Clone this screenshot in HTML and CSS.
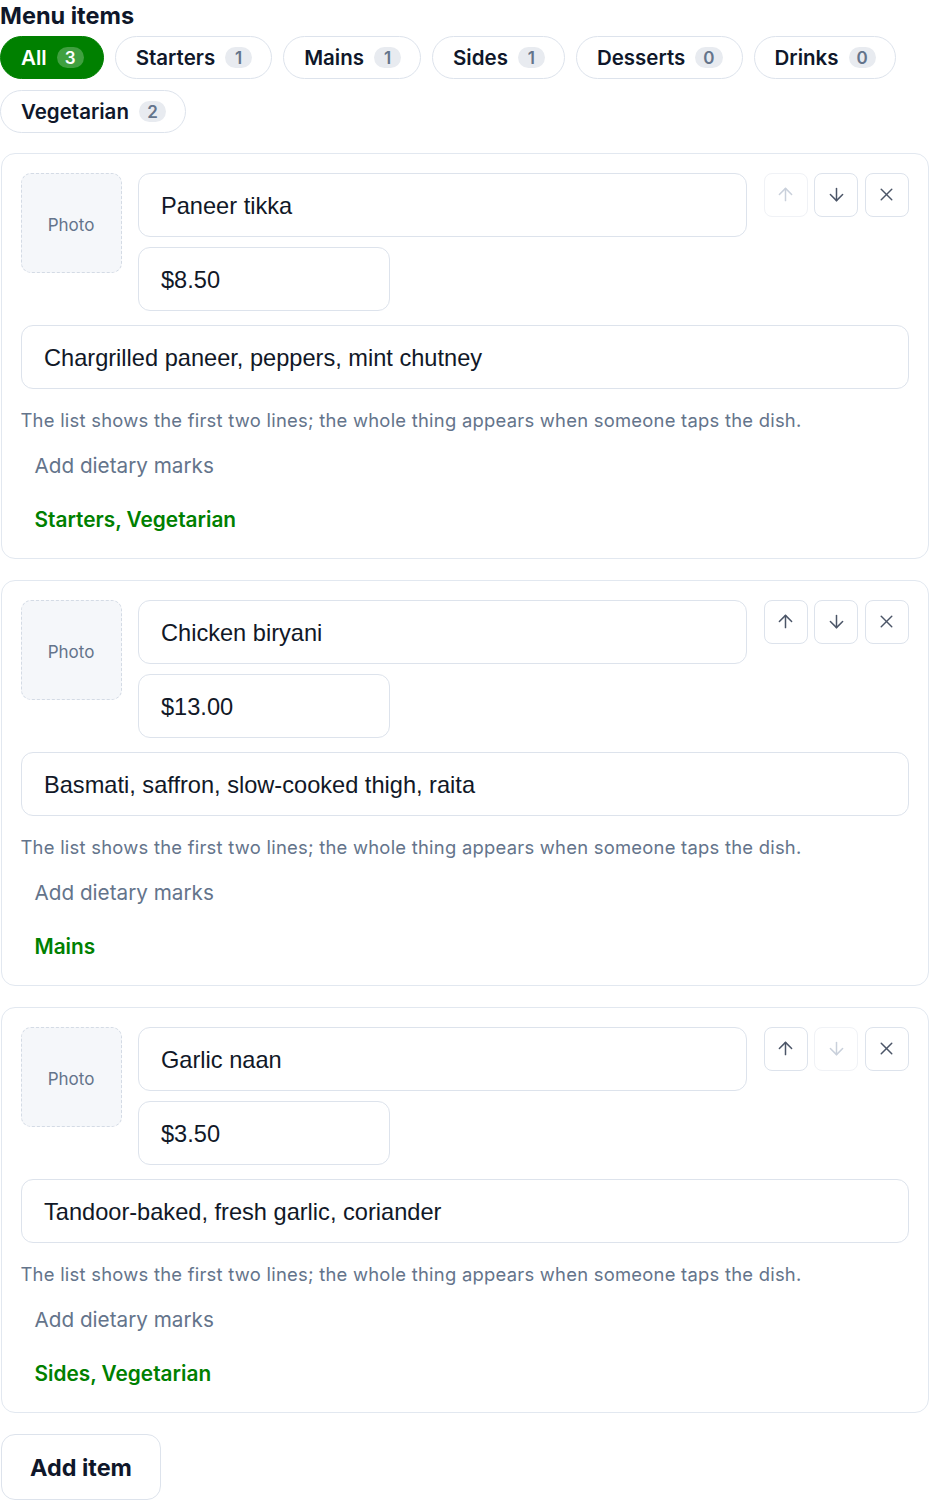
FILE: index.html
```html
<!DOCTYPE html>
<html lang="en">
<head>
<meta charset="utf-8">
<title>Menu items</title>
<link rel="stylesheet" href="styles.css">
</head>
<body>
<main class="page">
  <h2 class="title">Menu items</h2>
  <div class="chips">
    <button class="chip chip-active">All <span class="count">3</span></button>
    <button class="chip">Starters <span class="count">1</span></button>
    <button class="chip">Mains <span class="count">1</span></button>
    <button class="chip">Sides <span class="count">1</span></button>
    <button class="chip">Desserts <span class="count">0</span></button>
    <button class="chip">Drinks <span class="count">0</span></button>
    <button class="chip">Vegetarian <span class="count">2</span></button>
  </div>

  <div class="items">
    <section class="card">
      <div class="top">
        <div class="photo">Photo</div>
        <div class="fields">
          <div class="input name">Paneer tikka</div>
          <div class="input price">$8.50</div>
        </div>
        <div class="actions">
          <button class="icon-btn disabled" aria-label="Move up"><svg viewBox="0 0 24 24"><path d="m5 12 7-7 7 7"/><path d="M12 19V5"/></svg></button>
          <button class="icon-btn" aria-label="Move down"><svg viewBox="0 0 24 24"><path d="M12 5v14"/><path d="m19 12-7 7-7-7"/></svg></button>
          <button class="icon-btn" aria-label="Remove"><svg viewBox="0 0 24 24"><path d="M18 6 6 18"/><path d="m6 6 12 12"/></svg></button>
        </div>
      </div>
      <div class="input desc">Chargrilled paneer, peppers, mint chutney</div>
      <p class="hint">The list shows the first two lines; the whole thing appears when someone taps the dish.</p>
      <button class="diet">Add dietary marks</button>
      <div class="cats">Starters, Vegetarian</div>
    </section>

    <section class="card">
      <div class="top">
        <div class="photo">Photo</div>
        <div class="fields">
          <div class="input name">Chicken biryani</div>
          <div class="input price">$13.00</div>
        </div>
        <div class="actions">
          <button class="icon-btn" aria-label="Move up"><svg viewBox="0 0 24 24"><path d="m5 12 7-7 7 7"/><path d="M12 19V5"/></svg></button>
          <button class="icon-btn" aria-label="Move down"><svg viewBox="0 0 24 24"><path d="M12 5v14"/><path d="m19 12-7 7-7-7"/></svg></button>
          <button class="icon-btn" aria-label="Remove"><svg viewBox="0 0 24 24"><path d="M18 6 6 18"/><path d="m6 6 12 12"/></svg></button>
        </div>
      </div>
      <div class="input desc">Basmati, saffron, slow-cooked thigh, raita</div>
      <p class="hint">The list shows the first two lines; the whole thing appears when someone taps the dish.</p>
      <button class="diet">Add dietary marks</button>
      <div class="cats">Mains</div>
    </section>

    <section class="card">
      <div class="top">
        <div class="photo">Photo</div>
        <div class="fields">
          <div class="input name">Garlic naan</div>
          <div class="input price">$3.50</div>
        </div>
        <div class="actions">
          <button class="icon-btn" aria-label="Move up"><svg viewBox="0 0 24 24"><path d="m5 12 7-7 7 7"/><path d="M12 19V5"/></svg></button>
          <button class="icon-btn disabled" aria-label="Move down"><svg viewBox="0 0 24 24"><path d="M12 5v14"/><path d="m19 12-7 7-7-7"/></svg></button>
          <button class="icon-btn" aria-label="Remove"><svg viewBox="0 0 24 24"><path d="M18 6 6 18"/><path d="m6 6 12 12"/></svg></button>
        </div>
      </div>
      <div class="input desc">Tandoor-baked, fresh garlic, coriander</div>
      <p class="hint">The list shows the first two lines; the whole thing appears when someone taps the dish.</p>
      <button class="diet">Add dietary marks</button>
      <div class="cats">Sides, Vegetarian</div>
    </section>
  </div>

  <button class="add">Add item</button>
</main>
</body>
</html>
```

FILE: styles.css
```css
* { box-sizing: border-box; }

body {
  margin: 0;
  background: #ffffff;
  font-family: Inter, "Noto Sans", sans-serif;
  color: #0f172a;
}

button {
  font-family: inherit;
  background: #ffffff;
  cursor: pointer;
}

.page {
  width: 930px;
  padding: 0 1px 0 0;
}

.title {
  margin: 0;
  font-size: 23.5px;
  line-height: 31px;
  font-weight: 700;
  color: #0f172a;
}

.chips {
  display: flex;
  flex-wrap: wrap;
  gap: 11px;
  margin-top: 5px;
}

.chip {
  display: inline-flex;
  align-items: center;
  height: 43px;
  padding: 0 19px 0 20px;
  border: 1.5px solid #dde3ec;
  border-radius: 999px;
  font-size: 20.5px;
  font-weight: 600;
  color: #0f172a;
}

.count {
  display: inline-flex;
  align-items: center;
  justify-content: center;
  height: 21px;
  min-width: 27px;
  padding: 0 8px;
  margin-left: 10px;
  border-radius: 999px;
  background: #e8ebf0;
  color: #64748b;
  font-size: 17px;
  font-weight: 600;
}

.chip-active {
  background: #008000;
  border-color: #008000;
  color: #ffffff;
}

.chip-active .count {
  background: rgba(255, 255, 255, 0.25);
  color: #ffffff;
}

.items {
  display: flex;
  flex-direction: column;
  gap: 21px;
  margin-top: 20px;
  margin-left: 1px;
}

.card {
  border: 1.5px solid #e2e8f0;
  border-radius: 14px;
  padding: 18.5px 19.5px 18.5px 18.5px;
}

.top {
  display: flex;
  align-items: flex-start;
}

.photo {
  flex: none;
  width: 101px;
  height: 100px;
  padding-top: 4px;
  border: 1.5px dashed #d4dbe5;
  border-radius: 10px;
  background: #f5f7fa;
  display: flex;
  align-items: center;
  justify-content: center;
  font-size: 17px;
  color: #64748b;
}

.fields {
  flex: 1;
  display: flex;
  flex-direction: column;
  gap: 10px;
  margin-left: 16px;
}

.input {
  height: 64px;
  border: 1.5px solid #dde3ec;
  border-radius: 12px;
  padding: 3px 22.5px 0;
  display: flex;
  align-items: center;
  font-family: "Liberation Sans", Arial, sans-serif;
  font-size: 23.6px;
  color: #111827;
  background: #ffffff;
}

.price {
  width: 252px;
}

.actions {
  flex: none;
  display: flex;
  gap: 6.5px;
  margin-left: 17px;
}

.icon-btn {
  width: 44px;
  height: 44px;
  padding: 0;
  border: 1.5px solid #dde3ec;
  border-radius: 8px;
  display: flex;
  align-items: center;
  justify-content: center;
  color: #4b5567;
}

.icon-btn svg {
  width: 21px;
  height: 21px;
  fill: none;
  stroke: currentColor;
  stroke-width: 1.7;
  stroke-linecap: round;
  stroke-linejoin: round;
}

.icon-btn.disabled {
  border-color: #f0f2f6;
  color: #c9d0db;
}

.desc {
  margin-top: 14px;
}

.hint {
  margin: 18px 0 0;
  font-size: 18.4px;
  letter-spacing: 0.25px;
  line-height: 26px;
  color: #64748b;
}

.diet {
  display: block;
  margin-top: 13px;
  height: 40px;
  padding: 0 14px;
  border: none;
  background: transparent;
  font-size: 20.7px;
  color: #64748b;
}

.cats {
  margin-top: 14px;
  padding: 0 14px;
  height: 40px;
  line-height: 40px;
  font-size: 20.8px;
  font-weight: 600;
  color: #008000;
}

.add {
  display: block;
  margin-top: 21px;
  margin-left: 1px;
  height: 66px;
  padding: 0 28px;
  border: 1.5px solid #dde3ec;
  border-radius: 14px;
  font-size: 23.4px;
  font-weight: 700;
  color: #0f172a;
}
```
